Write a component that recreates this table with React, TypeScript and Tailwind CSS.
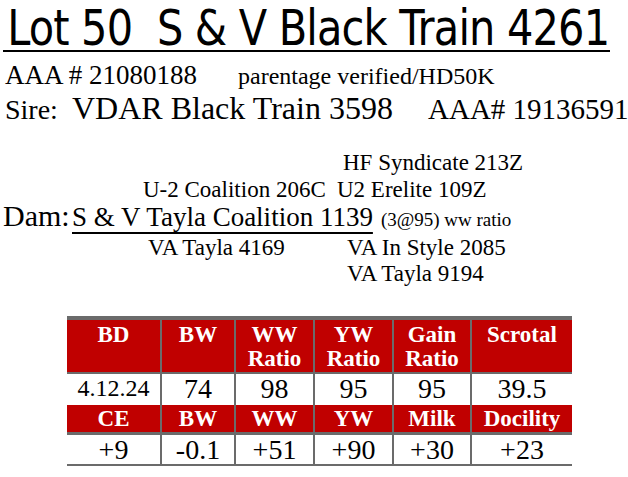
import React from "react";

const serif = "font-['Liberation_Serif','Times_New_Roman',serif]";

const cols = "grid grid-cols-[93px_74px_79px_79px_78px_102px]";

type RowProps = { cells: string[]; head?: boolean; tall?: boolean; small?: boolean; h: string };

const Row = ({ cells, head, tall, small, h }: RowProps) => (
  <div className={`${cols} ${h} ${head ? "bg-[#c00000] text-white font-bold" : "bg-white text-black"}`}>
    {cells.map((c, i) => {
      let size = "text-[28px] leading-[30px]";
      if (head) size = tall ? "text-[23px] leading-[24px] pt-[3px]" : "text-[23px] leading-[27px]";
      else if (small && i === 0) size = "text-[24px] leading-[28px]";
      return (
        <div key={i} className={`text-center ${i > 0 ? "border-l-2 border-[#6b6b6b]" : ""} ${size}`}>
          {c.split("\n").map((l, j) => (
            <div key={j}>{l}</div>
          ))}
        </div>
      );
    })}
  </div>
);

export default function App() {
  return (
    <div className={`w-[628px] h-[477px] bg-white text-black ${serif} overflow-hidden`}>
      <div className="ml-[3px] w-[607px] h-[52px] border-b-2 border-black pt-[3px] whitespace-nowrap">
        <h1 className="inline-block origin-left scale-x-[0.83] font-['DejaVu_Sans',sans-serif] text-[50px] leading-[50px] tracking-[-1px] pl-[5px]">
          Lot 50&nbsp; S &amp; V Black Train 4261
        </h1>
      </div>

      <div className="mt-[8px] h-[30px] pl-[5px] text-[27px] leading-[30px] whitespace-nowrap">
        <span className="inline-block w-[233px]">AAA # 21080188</span>
        <span className="text-[24px]">parentage verified/HD50K</span>
      </div>
      <div className="h-[36px] pl-[5px] text-[32px] leading-[36px] whitespace-nowrap">
        <span className="inline-block w-[67px] text-[28px]">Sire:</span>
        <span className="inline-block w-[356px]">VDAR Black Train 3598</span>
        <span className="text-[29px]">AAA# 19136591</span>
      </div>

      <div className="mt-[23px] text-[23px] leading-[27px] whitespace-nowrap">
        <div className="h-[27px] pl-[343px]">HF Syndicate 213Z</div>
        <div className="h-[25px] flex">
          <span className="pl-[143px] w-[337px]">U-2 Coalition 206C</span>
          <span>U2 Erelite 109Z</span>
        </div>
        <div className="h-[33px] pl-[3px] text-[30px] leading-[30px]">
          <span className="inline-block w-[69px]">Dam:</span>
          <span className="text-[27px] underline decoration-[1.5px] underline-offset-[6px]">S &amp; V Tayla Coalition 1139</span>
          <span className="text-[19px] ml-[8px]">(3@95) ww ratio</span>
        </div>
        <div className="h-[26px] flex">
          <span className="pl-[148px] w-[347px]">VA Tayla 4169</span>
          <span>VA In Style 2085</span>
        </div>
        <div className="h-[27px] pl-[347px]">VA Tayla 9194</div>
      </div>

      <div className="ml-[67px] mt-[29px] w-[505px] border-t-4 border-[#6b6b6b]">
        <Row head tall h="h-[52px]" cells={["BD", "BW", "WW\nRatio", "YW\nRatio", "Gain\nRatio", "Scrotal"]} />
        <div className="h-[2px] bg-[#6b6b6b]" />
        <Row small h="h-[31px]" cells={["4.12.24", "74", "98", "95", "95", "39.5"]} />
        <Row head h="h-[27px]" cells={["CE", "BW", "WW", "YW", "Milk", "Docility"]} />
        <div className="h-[3px] bg-[#6b6b6b]" />
        <Row h="h-[29px]" cells={["+9", "-0.1", "+51", "+90", "+30", "+23"]} />
        <div className="h-[2px] bg-[#6b6b6b]" />
      </div>
    </div>
  );
}
